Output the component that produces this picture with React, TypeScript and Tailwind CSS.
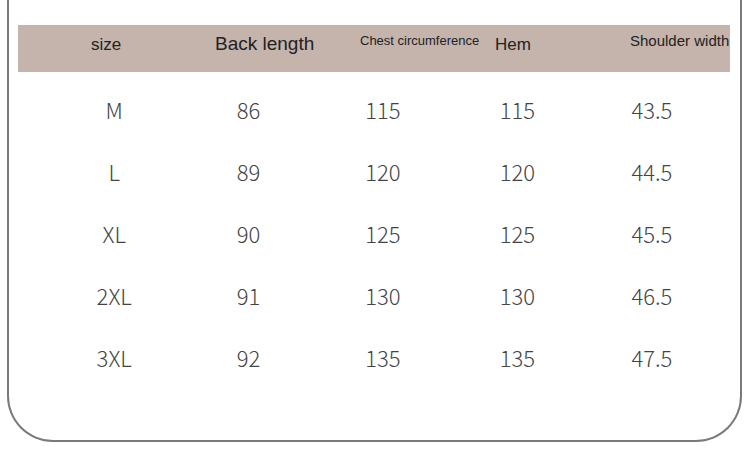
const rows = [
  ["M", "86", "115", "115", "43.5"],
  ["L", "89", "120", "120", "44.5"],
  ["XL", "90", "125", "125", "45.5"],
  ["2XL", "91", "130", "130", "46.5"],
  ["3XL", "92", "135", "135", "47.5"],
];

export default function App() {
  return (
    <div className="h-[475px] w-[750px] bg-white">
      <div className="ml-[7px] h-[442px] w-[735px] rounded-b-[46px] border-2 border-t-0 border-[#7a7a7a] pl-[9px] pt-[25px]">
        <div
          className="flex h-[47px] w-[712px] items-start overflow-hidden bg-[#c4b4ac] leading-none text-[#222]"
          style={{ fontFamily: '"Liberation Sans", Arial, sans-serif' }}
        >
          <div className="ml-[73px] w-[124px] shrink-0 pt-[11px] text-[17px]">size</div>
          <div className="w-[145px] shrink-0 pt-[9px] text-[19px]">Back length</div>
          <div className="w-[135px] shrink-0 pt-[9px] text-[13px]">Chest circumference</div>
          <div className="w-[135px] shrink-0 pt-[11px] text-[17px]">Hem</div>
          <div className="shrink-0 whitespace-nowrap pt-[8px] text-[15px]">Shoulder width</div>
        </div>
        <div
          className="ml-[29px] mt-[6px] grid w-[672px] grid-cols-5 text-[22px] font-light leading-none text-[#444]"
          style={{ fontFamily: '"Noto Sans CJK SC", "Noto Sans", sans-serif' }}
        >
          {rows.map((r) =>
            r.map((v, i) => (
              <div key={r[0] + i} className="flex h-[62px] items-center justify-center">
                {v}
              </div>
            ))
          )}
        </div>
      </div>
    </div>
  );
}
